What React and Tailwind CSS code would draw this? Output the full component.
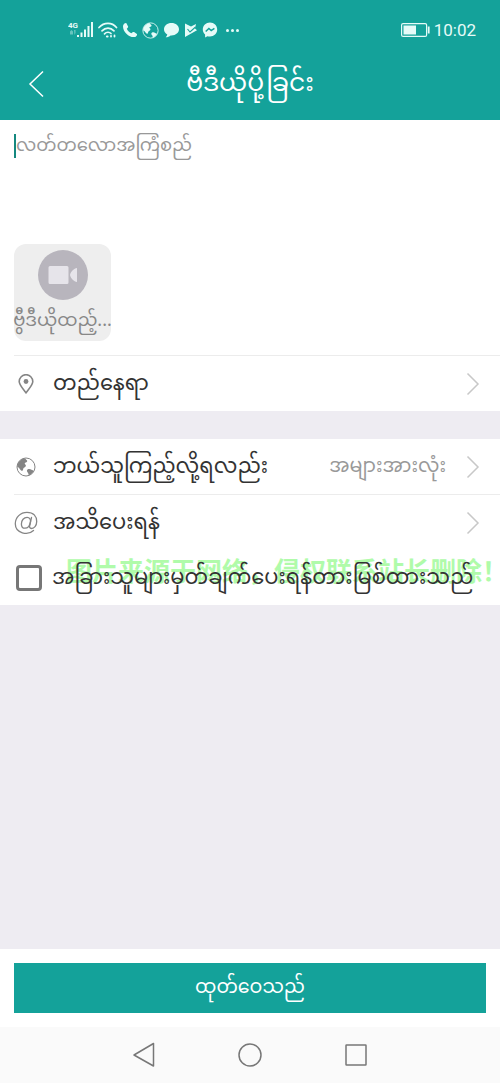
import React, { useState } from 'react';

const SignalIcon = () => (
  <svg width="26" height="18" viewBox="0 0 26 18" fill="currentColor" aria-hidden="true">
    <text x="0" y="7" fontSize="8" fontWeight="700" fontFamily="Roboto, sans-serif">4G</text>
    <path d="M2 10.5l1.5-1.5 1.5 1.5v3H2zM6 9h1.5v3L6.500 14z" opacity="0.4" />
    <path d="M9 14h2v2H9zM12.500 11.500h2V16h-2zM16 8.500h2V16h-2zM19.500 5h2v11h-2zM23 1h2v15h-2z" />
  </svg>
);

const WifiIcon = () => (
  <svg width="20" height="18" viewBox="0 0 20 18" fill="none" stroke="currentColor" strokeWidth="1.700" strokeLinecap="round" aria-hidden="true">
    <path d="M1 6.500C6 1 14 1 18.500 6.500" />
    <path d="M4 9.800c3.500-3.700 8.500-3.700 12 0" />
    <path d="M6.500 12.800c2-2 5-2 6.500-.3" />
    <path d="M9 15.500h.5" strokeWidth="2.200" />
    <path d="M13 15.500v-.5M16.500 14.500v1" strokeWidth="1.800" />
  </svg>
);

const PhoneIcon = () => (
  <svg width="16" height="18" viewBox="0 0 16 18" fill="currentColor" aria-hidden="true">
    <path d="M1.200 4.200C2 2.600 3.400 1.800 4.400 2.200l1.700 3.200c.2.500 0 1-.4 1.400L4.800 7.700c.9 2 2.500 3.600 4.600 4.600l1.200-1c.4-.4 1-.4 1.500-.2l2.800 1.800c.5.900-.2 2.300-1.700 3C7.500 17.500-.3 9.700 1.200 4.200z" />
  </svg>
);

const GlobeIcon = ({ size }) => (
  <svg width={size} height={size} viewBox="0 0 20 20" aria-hidden="true" className="shrink-0">
    <circle cx="10" cy="10" r="9" fill="none" stroke="currentColor" strokeWidth="1" />
    <path d="M7 1.800C3.500 3.200 1.200 6.500 1.300 10c1.200.2 2 1 2.700 2.200.5 1 1.300 1.700 2.400 1.500 1-.4.500-1.800 1.200-2.600 1-.9 2.400-1.400 2.300-2.700-.1-1-1.300-1-1.200-1.900.2-1 2.300-.9 2.500-2.200.2-1.200-1.400-1.300-1.500-2.300-.3-.8-1.600-.7-2.700-.2z" fill="currentColor" />
    <path d="M11.500 12.500c1.500-.9 3-.5 4 .3.800.6 1.700.6 2.300.9-1 2-2.700 3.700-5 4.700-.4-1-.2-1.800-.9-2.700-.7-.9-1.600-2.300-.4-3.200z" fill="currentColor" />
  </svg>
);

const ChatIcon = () => (
  <svg width="17" height="18" viewBox="0 0 17 18" fill="currentColor" aria-hidden="true">
    <path d="M8.500 2C4.300 2 1 4.700 1 8.300c0 2.300 1.300 4.200 3.300 5.300-.2 1-.8 2-1.600 2.700 2-.1 3.800-.9 4.900-1.900 4.700.4 8.400-2.400 8.400-6.100C16 4.700 12.700 2 8.500 2z" />
  </svg>
);

const PlayIcon = () => (
  <svg width="14" height="18" viewBox="0 0 14 18" aria-hidden="true">
    <path d="M1 2.500l6 3 5-2.500-1 4.500 2 1.800L1 16z" fill="currentColor" />
    <path d="M3.500 8l2.500 3 5.500-5" fill="none" stroke="#14a29a" strokeWidth="1.100" />
  </svg>
);

const MessengerIcon = () => (
  <svg width="16" height="18" viewBox="0 0 16 18" aria-hidden="true">
    <path d="M8 1.500C4 1.500 .8 4.600 .8 8.600c0 2 .9 3.800 2.300 5V16.400l2.300-1.200c.8.200 1.700.4 2.600.4 4 0 7.200-3 7.200-7S12 1.500 8 1.500z" fill="currentColor" />
    <path d="M3.700 10.500l3.200-3 2.300 2 3.200-2.200" fill="none" stroke="#14a29a" strokeWidth="1.500" />
  </svg>
);

const BatteryIcon = () => (
  <svg width="29" height="14" viewBox="0 0 29 14" aria-hidden="true">
    <rect x="0.600" y="0.600" width="25" height="12.800" rx="1.500" fill="none" stroke="currentColor" strokeWidth="1.200" />
    <rect x="2.500" y="2.500" width="12.500" height="9" fill="currentColor" />
    <path d="M26.800 3.500h1.800v7h-1.800z" fill="currentColor" />
  </svg>
);

const PinIcon = () => (
  <svg width="16" height="20" viewBox="0 0 16 20" fill="none" stroke="currentColor" strokeWidth="1.600" aria-hidden="true">
    <path d="M8 18.800C5 14.500 1.200 11 1.200 7.500a6.800 6.800 0 0 1 13.600 0C14.800 11 11 14.500 8 18.800z" />
    <circle cx="8" cy="7.500" r="2.400" fill="currentColor" stroke="none" />
  </svg>
);

const AtIcon = () => (
  <svg width="24" height="24" viewBox="0 0 24 24" fill="none" stroke="currentColor" strokeWidth="1.300" strokeLinecap="round" aria-hidden="true">
    <path d="M19.500 19.500C14 24.800 1.300 22.500 1.300 12.800 1.300 6.300 6.500 1.300 13 1.300S22.700 5.300 22.700 10.500c0 4.300-2.700 7-5.200 7-1.700 0-2.200-1.200-1.800-3L17.500 6.500" />
    <path d="M16.500 10.800c.3-2.600-1-4.500-3.400-4.500-3.200 0-5.700 3-5.700 6.600 0 2.600 1.300 4.300 3.500 4.300 2.900 0 5-2.800 5.600-6.400z" />
  </svg>
);

const Chevron = () => (
  <svg width="14" height="24" viewBox="0 0 14 24" fill="none" stroke="#c8c8c8" strokeWidth="1.500" aria-hidden="true">
    <path d="M1.500 1.500L12 12 1.500 22.500" />
  </svg>
);

const Row = ({ icon, label, value }) => (
  <button type="button" className="flex h-[55px] w-full items-center pr-5 pl-3.5 text-left">
    <span className="flex w-[39px] shrink-0">
      <span className="flex w-6 justify-center text-[#858585]">{icon}</span>
    </span>
    <span className="flex-1 pb-1 text-[21px] leading-8 text-[#333]">{label}</span>
    {value && <span className="mr-5 pb-1 text-[19px] leading-8 text-[#999]">{value}</span>}
    <Chevron />
  </button>
);

const App = () => {
  const [text, setText] = useState('');
  const [notify, setNotify] = useState(false);

  return (
    <div className="flex min-h-screen flex-col bg-[#eeecf2] font-['Noto_Sans','Noto_Sans_Myanmar','Noto_Sans_CJK_SC',sans-serif]">
      <header className="bg-[#14a29a] text-white">
        <div className="flex h-[60px] items-center pr-6 pl-[68px] text-[#e6fbf8]">
          <div className="flex flex-1 items-center gap-1">
            <SignalIcon />
            <WifiIcon />
            <PhoneIcon />
            <GlobeIcon size={17} />
            <ChatIcon />
            <PlayIcon />
            <MessengerIcon />
            <span className="ml-1 flex gap-0.5">
              <i className="size-[3px] rounded-full bg-current" />
              <i className="size-[3px] rounded-full bg-current" />
              <i className="size-[3px] rounded-full bg-current" />
            </span>
          </div>
          <BatteryIcon />
          <span className="ml-1 pt-0.5 font-[Roboto,sans-serif] text-[17px]">10:02</span>
        </div>
        <div className="flex h-[60px] items-start px-7">
          <button type="button" aria-label="Back" className="mt-2.5">
            <svg width="16" height="28" viewBox="0 0 16 28" fill="none" stroke="currentColor" strokeWidth="1.500">
              <path d="M15 1.500L2 14l13 12.500" />
            </svg>
          </button>
          <h1 className="flex-1 pr-4 text-center text-[25px] leading-[42px]">ဗီဒီယိုပို့ခြင်း</h1>
        </div>
      </header>

      <main className="flex-1">
        <section className="bg-white">
          <div className="flex px-3.5 pt-2.5">
            <span className="mt-1 h-6 w-0.5 bg-[#14887f]" />
            <textarea
              aria-label="လတ်တလောအကြံစည်"
              placeholder="လတ်တလောအကြံစည်"
              value={text}
              onChange={(e) => setText(e.target.value)}
              className="h-[114px] flex-1 resize-none text-lg leading-7 text-[#333] outline-none placeholder:text-[#999]"
            />
          </div>
          <div className="px-3.5 pb-3.5">
            <button type="button" className="flex h-[97px] w-[97px] flex-col items-center rounded-xl bg-[#eee] pt-1.5">
              <span className="flex size-[50px] shrink-0 items-center justify-center rounded-full bg-[#b8b5bd]">
                <svg width="30" height="18" viewBox="0 0 30 18" fill="#e6e4ea" aria-hidden="true">
                  <path d="M2 0h17a1.500 1.500 0 0 1 1.500 1.500v15A1.500 1.500 0 0 1 19 18H2A1.500 1.500 0 0 1 .500 16.500v-15A1.500 1.500 0 0 1 2 0zM29 2v14c-3-.5-6-3-7-7 1-4 4-6.500 7-7z" />
                </svg>
              </span>
              <span className="text-lg leading-[38px] whitespace-nowrap text-[#888]">ဗွီဒီယိုထည့်...</span>
            </button>
          </div>
          <div className="ml-3.5 border-t border-[#ececec]" />
          <Row icon={<PinIcon />} label="တည်နေရာ" />
        </section>

        <section className="relative mt-7 overflow-hidden bg-white">
          <Row icon={<GlobeIcon size={20} />} label="ဘယ်သူကြည့်လို့ရလည်း" value="အများအားလုံး" />
          <div className="ml-3.5 border-t border-[#ececec]" />
          <Row icon={<AtIcon />} label="အသိပေးရန်" />
          <p className="absolute -right-2 bottom-5 text-[26px] leading-7 font-bold whitespace-nowrap text-[#b0fbaa]">
            图片来源于网络，侵权联系站长删除！
          </p>
          <label className="relative flex h-[55px] items-center pl-4 text-[21px] text-[#333]">
            <input
              type="checkbox"
              checked={notify}
              onChange={(e) => setNotify(e.target.checked)}
              className="mr-2.5 size-[26px] shrink-0 appearance-none rounded-sm border-[3px] border-[#777] checked:bg-[#14a29a]"
            />
            <span className="pb-1 leading-8 whitespace-nowrap">အခြားသူများမှတ်ချက်ပေးရန်တားမြစ်ထားသည်</span>
          </label>
        </section>
      </main>

      <footer>
        <div className="bg-white p-3.5">
          <button type="button" className="h-[50px] w-full bg-[#14a29a] pb-1 text-[19px] text-white">ထုတ်ဝေသည်</button>
        </div>
        <nav className="flex h-14 items-center justify-center gap-[82px] bg-[#fafafa] text-[#777]">
          <button type="button" aria-label="Back">
            <svg width="24" height="26" viewBox="0 0 24 26" fill="none" stroke="currentColor" strokeWidth="1.500" strokeLinejoin="round">
              <path d="M21.500 1.500v22.500L2 13z" />
            </svg>
          </button>
          <button type="button" aria-label="Home">
            <svg width="24" height="24" viewBox="0 0 24 24" fill="none" stroke="currentColor" strokeWidth="1.500">
              <circle cx="12" cy="12" r="11" />
            </svg>
          </button>
          <button type="button" aria-label="Recent apps">
            <svg width="24" height="24" viewBox="0 0 24 24" fill="none" stroke="currentColor" strokeWidth="1.500">
              <rect x="2" y="2" width="20" height="20" rx="0.500" />
            </svg>
          </button>
        </nav>
      </footer>
    </div>
  );
};

export default App;
